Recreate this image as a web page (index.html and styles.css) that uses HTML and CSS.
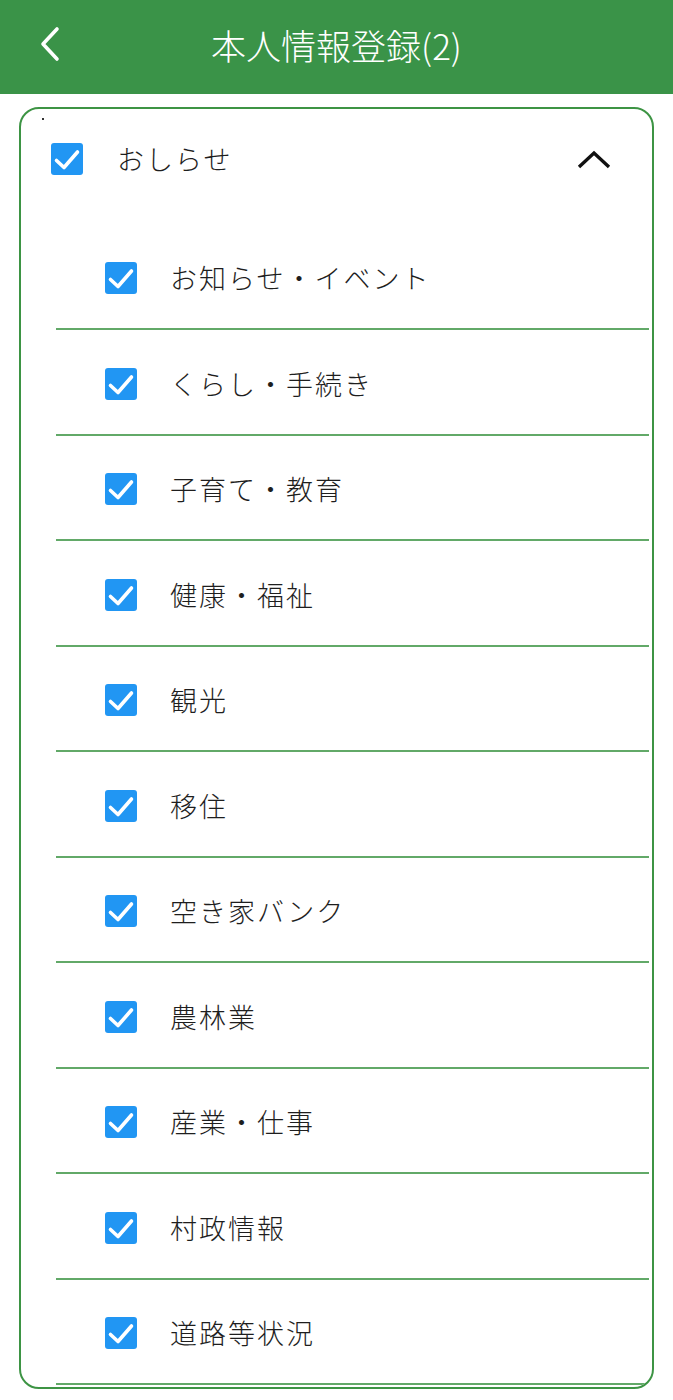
FILE: index.html
```html
<!DOCTYPE html>
<html lang="ja">
<head>
<meta charset="utf-8">
<title>本人情報登録(2)</title>
<link rel="stylesheet" href="styles.css">
</head>
<body>
<header class="appbar">
  <button class="back" aria-label="戻る">
    <svg width="24" height="36" viewBox="0 0 24 36"><path d="M19 3 L5 18 L19 33" fill="none" stroke="#fff" stroke-width="3.6" stroke-linecap="round" stroke-linejoin="round"/></svg>
  </button>
  <h1 class="title">本人情報登録(2)</h1>
  <span class="spacer"></span>
</header>

<main class="card">
  <span class="speck"></span>
  <div class="group-head">
    <span class="cb"><svg viewBox="0 0 32 32"><path d="M5.5 17.5 L13 24.5 L26.5 9" fill="none" stroke="#fff" stroke-width="3.6" stroke-linecap="round" stroke-linejoin="round"/></svg></span>
    <span class="group-label">おしらせ</span>
    <svg class="caret" width="34" height="19" viewBox="0 0 34 19"><path d="M2 17 L17 3 L32 17" fill="none" stroke="#111" stroke-width="3.4" stroke-linejoin="miter"/></svg>
  </div>
  <ul class="list">
    <li class="item"><span class="cb"><svg viewBox="0 0 32 32"><path d="M5.5 17.5 L13 24.5 L26.5 9" fill="none" stroke="#fff" stroke-width="3.6" stroke-linecap="round" stroke-linejoin="round"/></svg></span><span class="label">お知らせ・イベント</span></li>
    <li class="item"><span class="cb"><svg viewBox="0 0 32 32"><path d="M5.5 17.5 L13 24.5 L26.5 9" fill="none" stroke="#fff" stroke-width="3.6" stroke-linecap="round" stroke-linejoin="round"/></svg></span><span class="label">くらし・手続き</span></li>
    <li class="item"><span class="cb"><svg viewBox="0 0 32 32"><path d="M5.5 17.5 L13 24.5 L26.5 9" fill="none" stroke="#fff" stroke-width="3.6" stroke-linecap="round" stroke-linejoin="round"/></svg></span><span class="label">子育て・教育</span></li>
    <li class="item"><span class="cb"><svg viewBox="0 0 32 32"><path d="M5.5 17.5 L13 24.5 L26.5 9" fill="none" stroke="#fff" stroke-width="3.6" stroke-linecap="round" stroke-linejoin="round"/></svg></span><span class="label">健康・福祉</span></li>
    <li class="item"><span class="cb"><svg viewBox="0 0 32 32"><path d="M5.5 17.5 L13 24.5 L26.5 9" fill="none" stroke="#fff" stroke-width="3.6" stroke-linecap="round" stroke-linejoin="round"/></svg></span><span class="label">観光</span></li>
    <li class="item"><span class="cb"><svg viewBox="0 0 32 32"><path d="M5.5 17.5 L13 24.5 L26.5 9" fill="none" stroke="#fff" stroke-width="3.6" stroke-linecap="round" stroke-linejoin="round"/></svg></span><span class="label">移住</span></li>
    <li class="item"><span class="cb"><svg viewBox="0 0 32 32"><path d="M5.5 17.5 L13 24.5 L26.5 9" fill="none" stroke="#fff" stroke-width="3.6" stroke-linecap="round" stroke-linejoin="round"/></svg></span><span class="label">空き家バンク</span></li>
    <li class="item"><span class="cb"><svg viewBox="0 0 32 32"><path d="M5.5 17.5 L13 24.5 L26.5 9" fill="none" stroke="#fff" stroke-width="3.6" stroke-linecap="round" stroke-linejoin="round"/></svg></span><span class="label">農林業</span></li>
    <li class="item"><span class="cb"><svg viewBox="0 0 32 32"><path d="M5.5 17.5 L13 24.5 L26.5 9" fill="none" stroke="#fff" stroke-width="3.6" stroke-linecap="round" stroke-linejoin="round"/></svg></span><span class="label">産業・仕事</span></li>
    <li class="item"><span class="cb"><svg viewBox="0 0 32 32"><path d="M5.5 17.5 L13 24.5 L26.5 9" fill="none" stroke="#fff" stroke-width="3.6" stroke-linecap="round" stroke-linejoin="round"/></svg></span><span class="label">村政情報</span></li>
    <li class="item"><span class="cb"><svg viewBox="0 0 32 32"><path d="M5.5 17.5 L13 24.5 L26.5 9" fill="none" stroke="#fff" stroke-width="3.6" stroke-linecap="round" stroke-linejoin="round"/></svg></span><span class="label">道路等状況</span></li>
  </ul>
</main>
</body>
</html>
```

FILE: styles.css
```css
html, body {
  margin: 0;
  padding: 0;
  background: #fff;
}

body {
  font-family: "Noto Sans CJK JP", "Noto Sans", sans-serif;
  color: #1e1e1e;
}

.appbar {
  height: 94px;
  background: #3a9348;
  display: grid;
  grid-template-columns: 1fr auto 1fr;
  align-items: center;
}

.back {
  justify-self: start;
  margin-left: 36px;
  margin-top: -6px;
  padding: 0;
  border: 0;
  background: none;
  width: 28px;
  height: 40px;
  display: flex;
  align-items: center;
  justify-content: center;
}

.title {
  margin: -6px 0 0;
  font-size: 35px;
  font-weight: 300;
  color: #fff;
  letter-spacing: 0;
}

.card {
  position: relative;
  margin: 13px 19px 0;
  border: 2px solid #3d9444;
  border-radius: 20px;
  height: 1282px;
  overflow: hidden;
  box-sizing: border-box;
}

.speck {
  position: absolute;
  left: 21px;
  top: 9px;
  width: 1.5px;
  height: 1.5px;
  background: #333;
}

.group-head {
  height: 115.5px;
  box-sizing: border-box;
  padding: 34px 41px 0 30px;
  display: flex;
  align-items: flex-start;
}

.cb {
  flex: none;
  width: 32px;
  height: 32px;
  border-radius: 3px;
  background: #2196f3;
  display: block;
}

.cb svg {
  width: 32px;
  height: 32px;
  display: block;
}

.group-label {
  margin-left: 34px;
  font-size: 27px;
  font-weight: 300;
  line-height: 32px;
  letter-spacing: 2px;
  flex: 1;
}

.caret {
  margin-top: 7px;
}

.list {
  list-style: none;
  margin: 0 3px 0 35px;
  padding: 0;
}

.item {
  height: 105.5px;
  box-sizing: border-box;
  padding: 4px 0 0 49px;
  border-bottom: 2px solid #62a968;
  display: flex;
  align-items: center;
}

.label {
  margin-left: 33px;
  font-size: 27px;
  font-weight: 300;
  line-height: 32px;
  letter-spacing: 2px;
}
```
